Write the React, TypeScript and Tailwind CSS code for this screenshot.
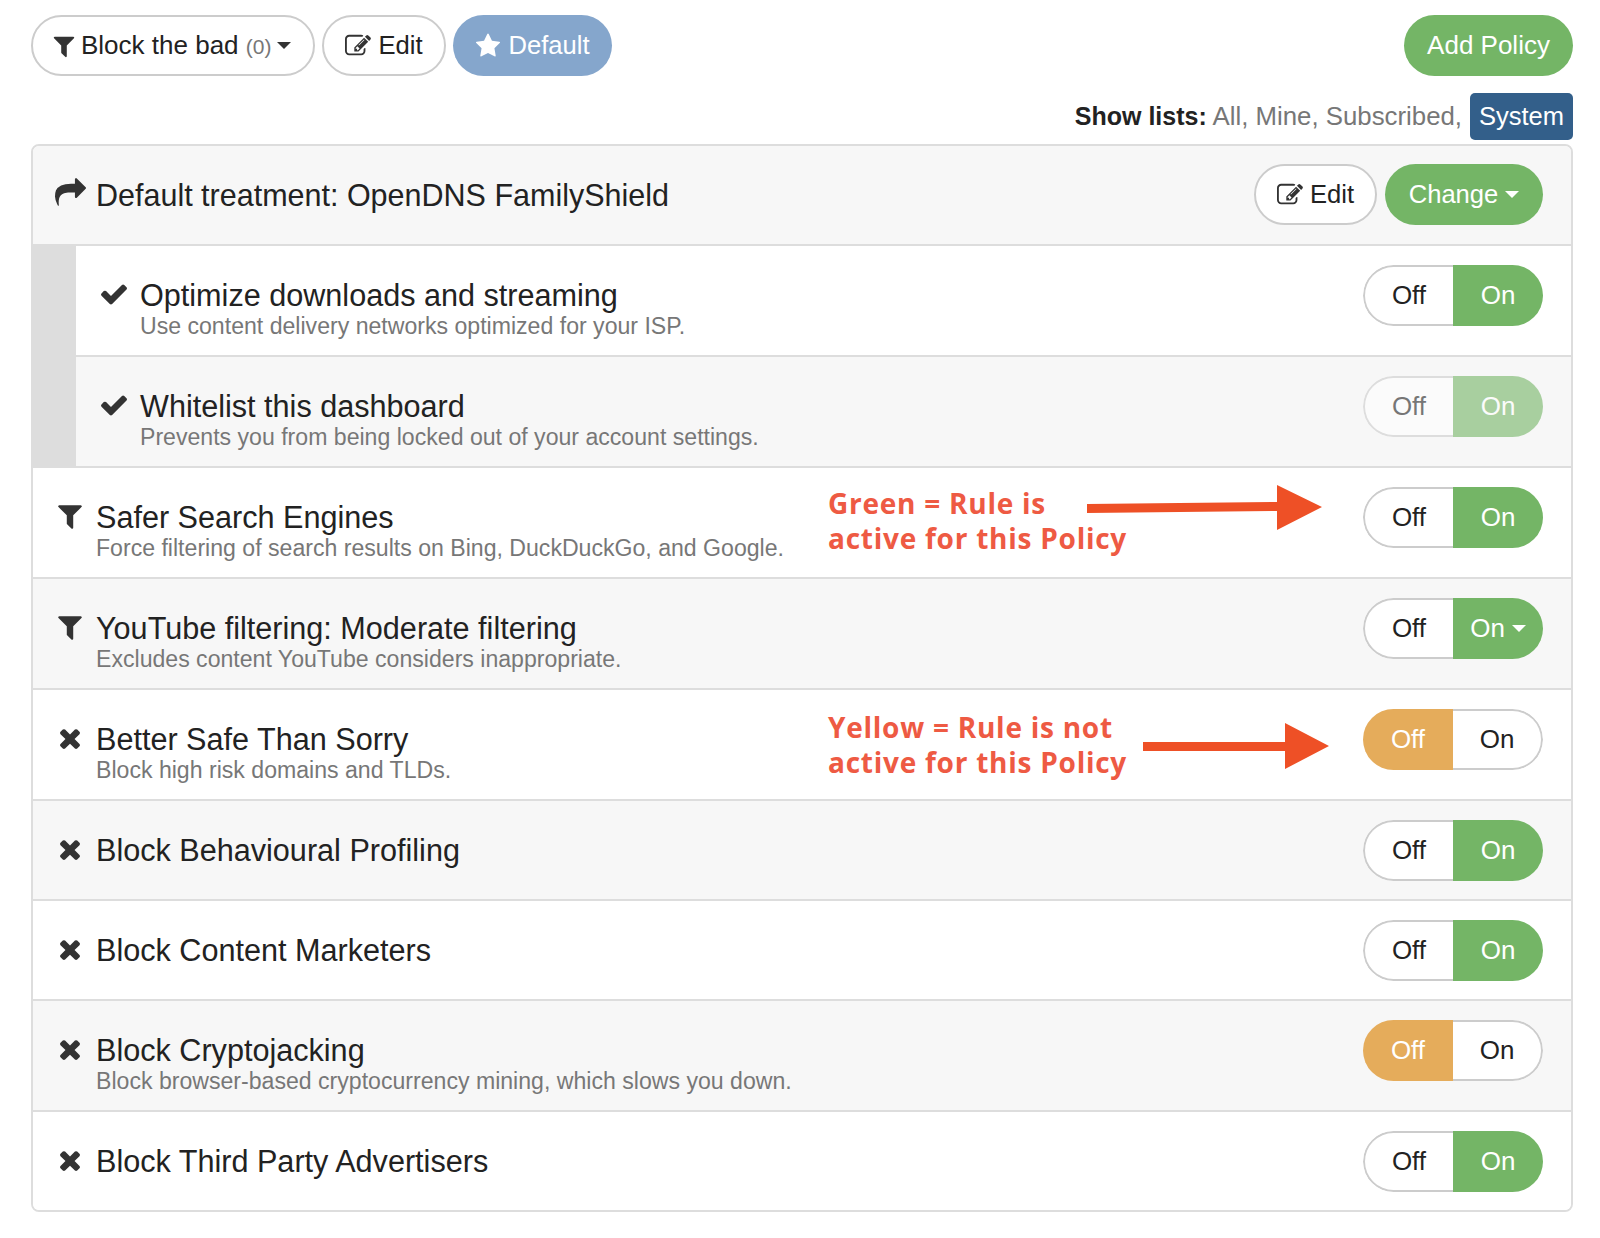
import React from 'react';

const paths: Record<string, string> = {
  check: 'M1671 566q0 40-28 68l-724 724-136 136q-28 28-68 28t-68-28l-136-136-362-362q-28-28-28-68t28-68l136-136q28-28 68-28t68 28l294 295 656-657q28-28 68-28t68 28l136 136q28 28 28 68z',
  times: 'M1490 1322q0 40-28 68l-136 136q-28 28-68 28t-68-28l-294-294-294 294q-28 28-68 28t-68-28l-136-136q-28-28-28-68t28-68l294-294-294-294q-28-28-28-68t28-68l136-136q28-28 68-28t68 28l294 294 294-294q28-28 68-28t68 28l136 136q28 28 28 68t-28 68l-294 294 294 294q28 28 28 68z',
  filter: 'M1595 295q17 41-14 70l-493 493v742q0 42-39 59-13 5-25 5-27 0-45-19l-256-256q-19-19-19-45v-486l-493-493q-31-29-14-70 17-39 59-39h1280q42 0 59 39z',
  share: 'M1792 640q0 26-19 45l-512 512q-19 19-45 19t-45-19-19-45v-256h-224q-98 0-175.5 6t-154 21.5-133 42.5-105.5 69.5-80 101-48.5 138.5-17.5 181q0 55 5 123 0 6 2.5 23.5t2.5 26.5q0 15-8.5 25t-23.5 10q-16 0-28-17-7-9-13-22t-13.5-30-10.5-24q-127-285-127-451 0-199 53-333 162-403 875-403h224v-256q0-26 19-45t45-19 45 19l512 512q19 19 19 45z',
  star: 'M1728 647q0 22-26 48l-363 354 86 500q1 7 1 20 0 21-10.5 35.5t-30.5 14.5q-19 0-40-12l-449-236-449 236q-22 12-40 12-21 0-31.5-14.5t-10.5-35.5q0-6 2-20l86-500-364-354q-25-27-25-48 0-37 56-46l502-73 225-455q19-41 49-41t49 41l225 455 502 73q56 9 56 46z',
  edit: 'M888 1184l116-116-152-152-116 116v56h96v96h56zm440-720q-16-16-33 1l-350 350q-17 17-1 33t33-1l350-350q17-17 1-33zm80 594v190q0 119-84.5 203.5t-203.5 84.5h-832q-119 0-203.5-84.5t-84.5-203.5v-832q0-119 84.5-203.5t203.5-84.5h832q63 0 117 25 15 7 18 23 3 17-9 29l-49 49q-14 14-32 8-23-6-45-6h-832q-66 0-113 47t-47 113v832q0 66 47 113t113 47h832q66 0 113-47t47-113v-126q0-13 9-22l64-64q15-15 35-7t20 29zm-96-738l288 288-672 672h-288v-288zm444 132l-92 92-288-288 92-92q28-28 68-28t68 28l152 152q28 28 28 68t-28 68z',
};

const Icon = ({ name, className }: { name: string; className: string }) => (
  <svg viewBox="0 0 1792 1792" fill="currentColor" className={className}>
    <path d={paths[name]} />
  </svg>
);

const Caret = ({ className }: { className: string }) => (
  <span className={`inline-block w-0 h-0 border-x-[7px] border-x-transparent border-t-[7px] ${className}`} />
);

const Toggle = ({ on = true, faded = false, caret = false }: { on?: boolean; faded?: boolean; caret?: boolean }) => (
  <div className={`flex h-[61px] w-[180px] shrink-0 overflow-hidden rounded-full text-[26px] ${faded ? 'opacity-60' : ''}`}>
    <div className={`flex w-[90px] items-center justify-center ${on ? 'border-2 border-r-0 border-[#ccc] rounded-l-full bg-white text-[#222]' : 'bg-[#e5ac5b] text-white'}`}>
      Off
    </div>
    <div className={`flex w-[90px] items-center justify-center gap-[7px] ${on ? 'bg-[#74b566] text-white' : 'border-2 border-l-0 border-[#ccc] rounded-r-full bg-white text-[#222]'}`}>
      On
      {caret && <Caret className="border-t-white" />}
    </div>
  </div>
);

const Row = ({ icon, title, desc, alt, height = 'h-[111px]', nested, last, children }: {
  icon: string; title: string; desc?: string; alt?: boolean; height?: string; nested?: boolean; last?: boolean; children?: React.ReactNode;
}) => (
  <div className={`relative flex items-start pr-[28px] pt-[19px] ${height} ${last ? '' : 'border-b-2 border-[#ddd]'} ${alt ? 'bg-[#f7f7f7]' : 'bg-white'}`}>
    <div className={`flex shrink-0 justify-center pt-[14px] ${nested ? 'w-[64px] pl-[12px]' : 'w-[63px] pl-[10px]'}`}>
      <Icon name={icon} className="h-[30px] w-[30px] text-[#333]" />
    </div>
    <div className="min-w-0 flex-1 pt-[14px]">
      <div className="text-[30.6px] leading-[32px] text-[#222]">{title}</div>
      {desc && <div className="text-[23.1px] leading-[30px] text-[#777]">{desc}</div>}
    </div>
    {children}
  </div>
);

const Note = ({ lines, top, shaft, head }: { lines: string[]; top: string; shaft: string; head: string }) => (
  <>
    <div className={`absolute left-[795px] ${top} font-['Open_Sans',sans-serif] text-[28px] font-bold leading-[35px] tracking-[0.75px] text-[#ee5a43]`}>
      {lines.map((l) => <div key={l}>{l}</div>)}
    </div>
    <svg className={`absolute ${shaft} h-[48px] w-[240px]`} viewBox="0 0 240 48">
      <path d={head} fill="#ee5026" />
    </svg>
  </>
);

const App = () => {
  return (
    <div className="h-[1238px] w-[1600px] bg-white pl-[31px] pr-[27px] pt-[15px] font-['Liberation_Sans',Arial,sans-serif]">
      <div className="flex h-[61px] text-[25.6px]">
        <button className="flex w-[284px] items-center gap-[4px] rounded-full border-2 border-[#ccc] bg-white pl-[18px] pr-[22px] text-[26px] text-[#222]">
          <Icon name="filter" className="h-[26px] w-[26px] text-[#333]" />
          <span>Block the bad <span className="text-[21px] text-[#777]">(0)</span></span>
          <Caret className="ml-auto border-t-[#333]" />
        </button>
        <button className="ml-[7px] flex w-[124px] items-center justify-center gap-[7px] rounded-full border-2 border-[#ccc] bg-white text-[#222]">
          <Icon name="edit" className="h-[26px] w-[26px] text-[#333]" />
          Edit
        </button>
        <button className="ml-[7px] flex w-[159px] items-center justify-center gap-[7px] rounded-full bg-[#85a6cc] text-white">
          <Icon name="star" className="h-[26px] w-[26px]" />
          Default
        </button>
        <button className="ml-auto w-[169px] rounded-full bg-[#74b566] text-[26px] text-white">Add Policy</button>
      </div>

      <div className="mt-[17px] flex h-[47px] items-center justify-end gap-[8px] text-[25.8px] text-[#777]">
        <div><b className="text-[25px] text-[#222]">Show lists:</b> All, Mine, Subscribed,</div>
        <div className="flex h-[47px] w-[103px] items-center justify-center rounded-[5px] bg-[#335f8a] text-[25.5px] text-white">System</div>
      </div>

      <div className="mt-[4px] overflow-hidden rounded-[8px] border-2 border-[#ddd]">
        <div className="flex h-[100px] items-start border-b-2 border-[#ddd] bg-[#f7f7f7] pr-[28px] pt-[18px]">
          <Icon name="share" className="ml-[22px] mr-[10px] mt-[13px] h-[31px] w-[31px] text-[#333]" />
          <div className="flex-1 pt-[13px] text-[30.5px] leading-[36px] text-[#222]">Default treatment: OpenDNS FamilyShield</div>
          <button className="flex h-[61px] w-[123px] items-center justify-center gap-[7px] rounded-full border-2 border-[#ccc] bg-white text-[25.6px] text-[#222]">
            <Icon name="edit" className="h-[26px] w-[26px] text-[#333]" />
            Edit
          </button>
          <button className="ml-[8px] flex h-[61px] w-[158px] items-center justify-center gap-[7px] rounded-full bg-[#74b566] text-[25.6px] text-white">
            Change
            <Caret className="border-t-white" />
          </button>
        </div>

        <div className="flex">
          <div className="w-[43px] shrink-0 border-b-2 border-[#ddd] bg-[#ddd]" />
          <div className="min-w-0 flex-1">
            <Row nested icon="check" title="Optimize downloads and streaming" desc="Use content delivery networks optimized for your ISP.">
              <Toggle />
            </Row>
            <Row nested alt icon="check" title="Whitelist this dashboard" desc="Prevents you from being locked out of your account settings.">
              <Toggle faded />
            </Row>
          </div>
        </div>

        <Row icon="filter" title="Safer Search Engines" desc="Force filtering of search results on Bing, DuckDuckGo, and Google.">
          <Note lines={['Green = Rule is', 'active for this Policy']} top="top-[18px]" shaft="left-[1054px] top-[15px]" head="M0 21 L190 19 V2 L235 24 L190 47 V28 L0 30 Z" />
          <Toggle />
        </Row>
        <Row alt icon="filter" title="YouTube filtering: Moderate filtering" desc="Excludes content YouTube considers inappropriate.">
          <Toggle caret />
        </Row>
        <Row icon="times" title="Better Safe Than Sorry" desc="Block high risk domains and TLDs.">
          <Note lines={['Yellow = Rule is not', 'active for this Policy']} top="top-[20px]" shaft="left-[1110px] top-[33px]" head="M0 19 H142 V0 L186 23 L142 46 V28 H0 Z" />
          <Toggle on={false} />
        </Row>
        <Row alt height="h-[100px]" icon="times" title="Block Behavioural Profiling">
          <Toggle />
        </Row>
        <Row height="h-[100px]" icon="times" title="Block Content Marketers">
          <Toggle />
        </Row>
        <Row alt icon="times" title="Block Cryptojacking" desc="Block browser-based cryptocurrency mining, which slows you down.">
          <Toggle on={false} />
        </Row>
        <Row last height="h-[98px]" icon="times" title="Block Third Party Advertisers">
          <Toggle />
        </Row>
      </div>
    </div>
  );
};

export default App;
